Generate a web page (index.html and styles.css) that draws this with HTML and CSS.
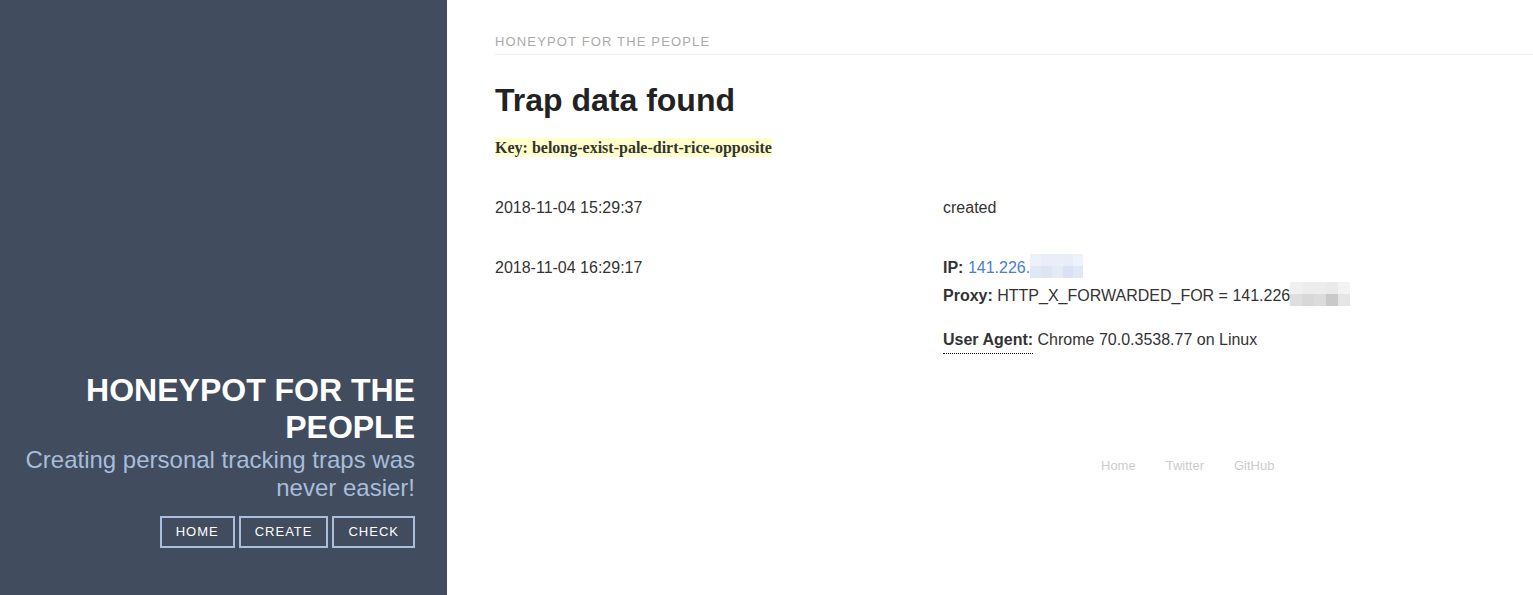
FILE: index.html
```html
<!DOCTYPE html>
<html lang="en">
<head>
<meta charset="utf-8">
<title>Honeypot for the people</title>
<link rel="stylesheet" href="styles.css">
</head>
<body>
<div class="page">
  <aside class="sidebar">
    <div class="sidebar-inner">
      <h1 class="site-title">HONEYPOT FOR THE PEOPLE</h1>
      <p class="lead">Creating personal tracking traps was never easier!</p>
      <nav class="nav">
        <a class="nav-btn" href="#">HOME</a>
        <a class="nav-btn" href="#">CREATE</a>
        <a class="nav-btn" href="#">CHECK</a>
      </nav>
    </div>
  </aside>
  <main class="content">
    <div class="masthead"><span class="masthead-title">HONEYPOT FOR THE PEOPLE</span></div>
    <h2 class="page-title">Trap data found</h2>
    <p class="key"><mark class="key-mark">Key: belong-exist-pale-dirt-rice-opposite</mark></p>
    <div class="rows">
      <div class="row">
        <div class="cell-time">2018-11-04 15:29:37</div>
        <div class="cell-data">created</div>
      </div>
      <div class="row">
        <div class="cell-time">2018-11-04 16:29:17</div>
        <div class="cell-data">
          <div class="line"><b>IP:</b> <a class="ip" href="#">141.226.</a><span class="blur blur-ip"><i style="background:#edf1f9"></i><i style="background:#e9eef8"></i><i style="background:#e9eef8"></i><i style="background:#e8edf8"></i><i style="background:#eef2fa"></i><i style="background:#e1e8f5"></i><i style="background:#dde4f3"></i><i style="background:#e4eaf6"></i><i style="background:#d9e1f2"></i><i style="background:#e1e8f5"></i></span></div>
          <div class="line"><b>Proxy:</b> HTTP_X_FORWARDED_FOR = 141.226<span class="blur blur-proxy"><i style="background:#f0f0f0"></i><i style="background:#ededed"></i><i style="background:#ededed"></i><i style="background:#eaeaea"></i><i style="background:#f3f3f3"></i><i style="background:#dedede"></i><i style="background:#d8d8d8"></i><i style="background:#dcdcdc"></i><i style="background:#c9c9c9"></i><i style="background:#e6e6e6"></i></span></div>
          <div class="line ua"><abbr class="ua-label" title="Mozilla/5.0">User Agent:</abbr> Chrome 70.0.3538.77 on Linux</div>
        </div>
      </div>
    </div>
    <footer class="footer">
      <a href="#">Home</a>
      <a href="#">Twitter</a>
      <a href="#">GitHub</a>
    </footer>
  </main>
</div>
</body>
</html>
```

FILE: styles.css
```css
* { box-sizing: border-box; }
html, body { margin: 0; padding: 0; height: 100%; }
body {
  font-family: "Liberation Sans", Arial, sans-serif;
  font-size: 16px;
  line-height: 1.5;
  color: #333;
  background: #fff;
}
.page {
  display: flex;
  min-height: 595px;
}
.sidebar {
  width: 447px;
  flex: 0 0 447px;
  background: #414c5e;
  display: flex;
  flex-direction: column;
  justify-content: flex-end;
  padding: 0 32px 47px 16px;
  text-align: right;
  min-height: 595px;
}
.site-title {
  margin: 0;
  font-size: 32px;
  line-height: 37px;
  font-weight: 700;
  color: #fff;
}
.lead {
  margin: 0;
  font-size: 24px;
  line-height: 28px;
  font-weight: 300;
  color: #a8bdd9;
}
.nav {
  display: flex;
  justify-content: flex-end;
  gap: 4px;
  margin-top: 14px;
}
.nav-btn {
  display: inline-block;
  height: 32px;
  line-height: 28px;
  padding: 0 14px;
  border: 2px solid #a9bfdb;
  color: #fff;
  text-decoration: none;
  font-size: 13px;
  letter-spacing: 1px;
}
.content {
  flex: 1;
  padding: 31px 0 0 48px;
  min-width: 0;
}
.masthead {
  border-bottom: 1px solid #eee;
  padding-bottom: 2px;
  line-height: 20px;
}
.masthead-title {
  font-size: 13px;
  letter-spacing: 1.15px;
  color: #aaa;
}
.page-title {
  margin: 25px 0 0;
  font-size: 32px;
  line-height: 40px;
  font-weight: 700;
  color: #222;
}
.key {
  margin: 18px 0 0;
  line-height: 20px;
}
.key-mark {
  background: #ffffcc;
  color: #333;
  font-family: "Liberation Serif", "Times New Roman", serif;
  font-weight: 700;
  font-size: 16px;
  padding: 1px 0;
}
.rows {
  margin-top: 36px;
  width: 896px;
}
.row {
  display: grid;
  grid-template-columns: 448px 448px;
  margin-bottom: 32px;
}
.cell-time, .cell-data { line-height: 28px; }
.line { line-height: 28px; height: 28px; white-space: nowrap; }
.line b { font-weight: 700; }
.ip { color: #4a7dd3; text-decoration: none; }
.blur {
  display: inline-grid;
  grid-template-rows: 12px 12px;
  vertical-align: top;
}
.blur i { display: block; }
.blur-ip { grid-template-columns: 11px 11px 11px 10px 10px; width: 53px; height: 24px; }
.blur-proxy { grid-template-columns: 12px 12px 12px 12px 12px; width: 60px; height: 24px; }
.ua { margin-top: 16px; }
.ua-label {
  font-weight: 700;
  text-decoration: none;
  border-bottom: 1px dotted #000;
  padding-bottom: 5px;
}
.footer {
  margin-top: 102px;
  display: flex;
  gap: 30px;
  padding-left: 606px;
  font-size: 13px;
}
.footer a {
  color: #ccc;
  text-decoration: none;
}
```
